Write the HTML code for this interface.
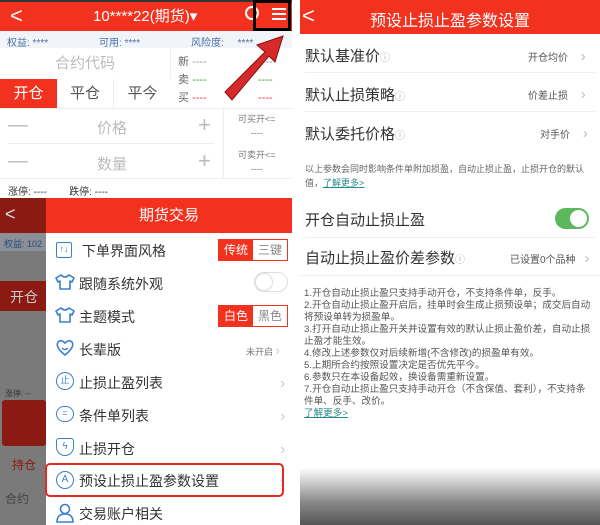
<!DOCTYPE html><html><head><meta charset="utf-8"><style>
*{margin:0;padding:0;box-sizing:border-box}
body{width:600px;height:525px;overflow:hidden;background:#fff;font-family:"Liberation Sans","Noto Sans CJK SC",sans-serif;position:relative}
.a{position:absolute;white-space:nowrap}
.red{background:#f2321e}
.g{color:#bbb}
</style></head><body>
<!-- LEFT TOP -->
<div class="a red" style="left:0;top:0;width:292px;height:31px;border-top:2px solid #333"></div>
<div class="a" style="left:10px;top:3px;color:#fff;font-size:22px">&lt;</div>
<div class="a" style="left:93px;top:5px;color:#fff;font-size:15px">10****22(期货)▾</div>
<div class="a" style="left:245px;top:6px;width:14px;height:14px;border:2px solid #fff;border-radius:50%"></div>
<div class="a" style="left:253px;top:0;width:38px;height:31px;border:3px solid #000"></div>
<div class="a" style="left:272px;top:8px;width:14px;height:2px;background:#fff;box-shadow:0 5px #fff,0 10px #fff"></div>
<div class="a" style="left:0;top:31px;width:292px;height:17px;background:#f1f4f8;font-size:10px;color:#4a6fa5;padding:3px 7px">权益: ****<span style="position:absolute;left:99px">可用: ****</span><span style="position:absolute;left:191px">风险度:&nbsp;&nbsp;&nbsp;&nbsp; ****</span></div>
<div class="a" style="left:0;top:48px;width:171px;height:31px;border-right:1px solid #eee;font-size:15px;color:#bbb;text-align:center;line-height:31px">合约代码</div>
<div class="a red" style="left:0;top:79px;width:57px;height:29px;color:#fff;font-size:15px;text-align:center;line-height:29px">开仓</div>
<div class="a" style="left:57px;top:79px;width:57px;height:29px;color:#555;font-size:15px;text-align:center;line-height:29px;border-right:1px solid #eee">平仓</div>
<div class="a" style="left:114px;top:79px;width:57px;height:29px;color:#555;font-size:15px;text-align:center;line-height:29px">平今</div>
<div class="a" style="left:178px;top:53px;font-size:11px;color:#666;line-height:18px">新 <span style="color:#999">----</span><br>卖 <span style="color:#3a3">----</span><br>买 <span style="color:#e33">----</span></div>
<div class="a" style="left:258px;top:53px;font-size:11px;line-height:18px"><span style="color:#999">----</span><br><span style="color:#3a3">----</span><br><span style="color:#e33">----</span></div>
<div class="a" style="left:0;top:108px;width:292px;height:1px;background:#eee"></div>
<div class="a g" style="left:8px;top:114px;font-size:20px">—</div><div class="a g" style="left:97px;top:117px;font-size:15px">价格</div><div class="a g" style="left:198px;top:112px;font-size:22px">+</div>
<div class="a" style="left:8px;top:143px;width:206px;height:1px;background:#eee"></div>
<div class="a g" style="left:8px;top:150px;font-size:20px">—</div><div class="a g" style="left:97px;top:153px;font-size:15px">数量</div><div class="a g" style="left:198px;top:148px;font-size:22px">+</div>
<div class="a" style="left:223px;top:108px;width:1px;height:70px;background:#eee"></div>
<div class="a" style="left:238px;top:112px;font-size:9px;color:#777;line-height:14px;text-align:center">可买开&lt;=<br>----</div>
<div class="a" style="left:238px;top:148px;font-size:9px;color:#777;line-height:14px;text-align:center">可卖开&lt;=<br>----</div>
<div class="a" style="left:0;top:178px;width:292px;height:1px;background:#eee"></div>
<div class="a" style="left:8px;top:183px;font-size:10px;color:#333">涨停: ----&nbsp;&nbsp;&nbsp;&nbsp;&nbsp;&nbsp;&nbsp;&nbsp;跌停: ----</div>
<svg class="a" style="left:215px;top:28px" width="80" height="80"><polygon points="10,64 50,24 42,17 68,8 60,34 54,28 17,72" fill="#d62a2a" stroke="#8a1010" stroke-width="1"/></svg>
<!-- LEFT BOTTOM -->
<div class="a" style="left:0;top:198px;width:292px;height:327px;background:#5a4a48"></div>
<div class="a" style="left:0;top:198px;width:46px;height:35px;background:#8a1a12"></div>
<div class="a" style="left:5px;top:204px;color:#ddd;font-size:18px">&lt;</div>
<div class="a" style="left:0;top:233px;width:46px;height:18px;background:#8a8f98;font-size:9px;color:#2a4a7a;padding:4px">权益: 102</div>
<div class="a" style="left:0;top:251px;width:46px;height:274px;background:#7a7a7a"></div>
<div class="a" style="left:0;top:281px;width:46px;height:30px;background:#8a1a12;color:#ccc;font-size:14px;padding:6px 10px">开仓</div>
<div class="a" style="left:2px;top:400px;width:44px;height:46px;background:#8a1a12;border-radius:3px"></div>
<div class="a" style="left:5px;top:388px;font-size:8px;color:#333">涨停: --</div>
<div class="a" style="left:12px;top:456px;font-size:12px;color:#8a1a12">持仓</div>
<div class="a" style="left:5px;top:490px;font-size:12px;color:#444">合约</div>
<div class="a red" style="left:46px;top:198px;width:246px;height:35px;color:#fff;font-size:15px;text-align:center;line-height:35px">期货交易</div>
<div class="a" style="left:46px;top:233px;width:246px;height:292px;background:#fff;font-size:14px;color:#333">
<div class="a" style="left:10px;top:9px;width:16px;height:16px;border:1.5px solid #3a7fd0;border-radius:2px;font-size:9px;color:#3a7fd0;text-align:center;line-height:13px">↑↓</div><div class="a" style="left:36px;top:8px">下单界面风格</div>
<div class="a" style="left:172px;top:6px;width:70px;height:22px;border:1px solid #f2321e;font-size:12px;display:flex"><span style="flex:1;background:#f2321e;color:#fff;text-align:center;line-height:20px">传统</span><span style="flex:1;color:#888;text-align:center;line-height:20px">三键</span></div>
<svg class="a" style="left:9px;top:40px" width="20" height="18"><path d="M6 2 L1 5 L3 9 L5 8 L5 16 L15 16 L15 8 L17 9 L19 5 L14 2 Q10 6 6 2Z" fill="none" stroke="#3a7fd0" stroke-width="1.6" stroke-linejoin="round"/></svg><div class="a" style="left:33px;top:41px">跟随系统外观</div>
<div class="a" style="left:208px;top:39px;width:34px;height:20px;border:1px solid #ddd;border-radius:10px"><div style="width:18px;height:18px;border-radius:50%;border:1px solid #ddd;background:#fff"></div></div>
<svg class="a" style="left:9px;top:73px" width="20" height="18"><path d="M6 2 L1 5 L3 9 L5 8 L5 16 L15 16 L15 8 L17 9 L19 5 L14 2 Q10 6 6 2Z" fill="none" stroke="#3a7fd0" stroke-width="1.6" stroke-linejoin="round"/></svg><div class="a" style="left:33px;top:74px">主题模式</div>
<div class="a" style="left:172px;top:72px;width:70px;height:22px;border:1px solid #f2321e;font-size:12px;display:flex"><span style="flex:1;background:#f2321e;color:#fff;text-align:center;line-height:20px">白色</span><span style="flex:1;color:#888;text-align:center;line-height:20px">黑色</span></div>
<svg class="a" style="left:9px;top:106px" width="20" height="18"><path d="M10 4 Q14 0 17 3 Q20 8 10 16 Q0 8 3 3 Q6 0 10 4Z" fill="none" stroke="#3a7fd0" stroke-width="1.6"/><path d="M7 9 Q10 12 13 9" fill="none" stroke="#3a7fd0" stroke-width="1.4"/></svg><div class="a" style="left:33px;top:107px">长辈版</div><div class="a" style="left:200px;top:110px;font-size:9px;color:#777">未开启 <span style="font-size:13px;color:#ccc">›</span></div>
<div class="a" style="left:10px;top:139px;width:18px;height:18px;border:1.5px solid #3a7fd0;border-radius:50%;font-size:9px;color:#3a7fd0;text-align:center;line-height:15px">止</div><div class="a" style="left:33px;top:140px">止损止盈列表</div>
<div class="a" style="left:10px;top:173px;width:18px;height:16px;border:1.5px solid #3a7fd0;border-radius:8px;font-size:9px;color:#3a7fd0;text-align:center;line-height:12px">=</div><div class="a" style="left:33px;top:173px">条件单列表</div>
<div class="a" style="left:10px;top:205px;width:18px;height:18px;border:1.5px solid #3a7fd0;border-radius:3px 3px 9px 9px;font-size:10px;color:#3a7fd0;text-align:center;line-height:15px">ϟ</div><div class="a" style="left:33px;top:206px">止损开仓</div>
<div class="a" style="left:234px;top:134px;color:#ccc;font-size:16px;line-height:33px">›<br>›<br>›<br>›</div>
<div class="a" style="left:-1px;top:230px;width:239px;height:34px;border:2px solid #e52a20;border-radius:5px"></div>
<div class="a" style="left:10px;top:238px;width:18px;height:18px;border:1.5px solid #3a7fd0;border-radius:50%;font-size:10px;color:#3a7fd0;text-align:center;line-height:15px">A</div><div class="a" style="left:33px;top:238px">预设止损止盈参数设置</div>
<svg class="a" style="left:9px;top:270px" width="20" height="20"><circle cx="10" cy="6" r="4.5" fill="none" stroke="#3a7fd0" stroke-width="1.6"/><path d="M2 19 Q2 11 10 11 Q18 11 18 19Z" fill="none" stroke="#3a7fd0" stroke-width="1.6"/></svg><div class="a" style="left:33px;top:271px">交易账户相关</div>
</div>
<div class="a" style="left:292px;top:0;width:8px;height:525px;background:#fff"></div>
<!-- RIGHT -->
<div class="a red" style="left:300px;top:0;width:300px;height:34px"></div>
<div class="a" style="left:302px;top:3px;color:#fff;font-size:22px">&lt;</div>
<div class="a" style="left:300px;top:7px;width:300px;text-align:center;color:#fff;font-size:16px">预设止损止盈参数设置</div>
<div class="a" style="left:305px;top:45px;font-size:15px;color:#333">默认基准价<span style="font-size:10px;color:#aaa">ⓘ</span></div><div class="a" style="left:528px;top:48px;font-size:10px;color:#555">开仓均价 <span style="color:#bbb;font-size:15px;margin-left:10px">›</span></div>
<div class="a" style="left:305px;top:72px;width:290px;height:1px;background:#f0f0f0"></div>
<div class="a" style="left:305px;top:84px;font-size:15px;color:#333">默认止损策略<span style="font-size:10px;color:#aaa">ⓘ</span></div><div class="a" style="left:528px;top:86px;font-size:10px;color:#555">价差止损 <span style="color:#bbb;font-size:15px;margin-left:10px">›</span></div>
<div class="a" style="left:305px;top:111px;width:290px;height:1px;background:#f0f0f0"></div>
<div class="a" style="left:305px;top:123px;font-size:15px;color:#333">默认委托价格<span style="font-size:10px;color:#aaa">ⓘ</span></div><div class="a" style="left:540px;top:125px;font-size:10px;color:#555">对手价 <span style="color:#bbb;font-size:15px;margin-left:10px">›</span></div>
<div class="a" style="left:305px;top:162px;width:285px;white-space:normal;font-size:9px;color:#666;line-height:14px">以上参数会同时影响条件单附加损盈，自动止损止盈，止损开仓的默认值，<span style="color:#2a8a8a;text-decoration:underline">了解更多&gt;</span></div>
<div class="a" style="left:305px;top:209px;font-size:15px;color:#333">开仓自动止损止盈</div>
<div class="a" style="left:555px;top:208px;width:34px;height:21px;background:#5cb85c;border-radius:11px"><div style="position:absolute;right:2px;top:2px;width:17px;height:17px;background:#fff;border-radius:50%"></div></div>
<div class="a" style="left:305px;top:237px;width:290px;height:1px;background:#f0f0f0"></div>
<div class="a" style="left:305px;top:247px;font-size:15px;color:#333">自动止损止盈价差参数<span style="font-size:10px;color:#aaa">ⓘ</span></div><div class="a" style="left:510px;top:250px;font-size:10px;color:#555">已设置0个品种 <span style="color:#bbb;font-size:15px;margin-left:6px">›</span></div>
<div class="a" style="left:300px;top:275px;width:300px;height:1px;background:#f0f0f0"></div>
<div class="a" style="left:304px;top:288px;width:290px;white-space:normal;font-size:9.6px;color:#555;line-height:12px">1.开仓自动止损止盈只支持手动开仓，不支持条件单，反手。<br>2.开仓自动止损止盈开启后，挂单时会生成止损预设单；成交后自动将预设单转为损盈单。<br>3.打开自动止损止盈开关并设置有效的默认止损止盈价差，自动止损止盈才能生效。<br>4.修改上述参数仅对后续新增(不含修改)的损盈单有效。<br>5.上期所合约按照设置决定是否优先平今。<br>6.参数只在本设备起效，换设备需重新设置。<br>7.开仓自动止损止盈只支持手动开仓（不含保值、套利），不支持条件单、反手、改价。<br><span style="color:#2a8a8a;text-decoration:underline">了解更多&gt;</span></div>
<div class="a" style="left:300px;top:468px;width:300px;height:57px;background:linear-gradient(#fff,#888 60%,#555)"></div>
</body></html>
